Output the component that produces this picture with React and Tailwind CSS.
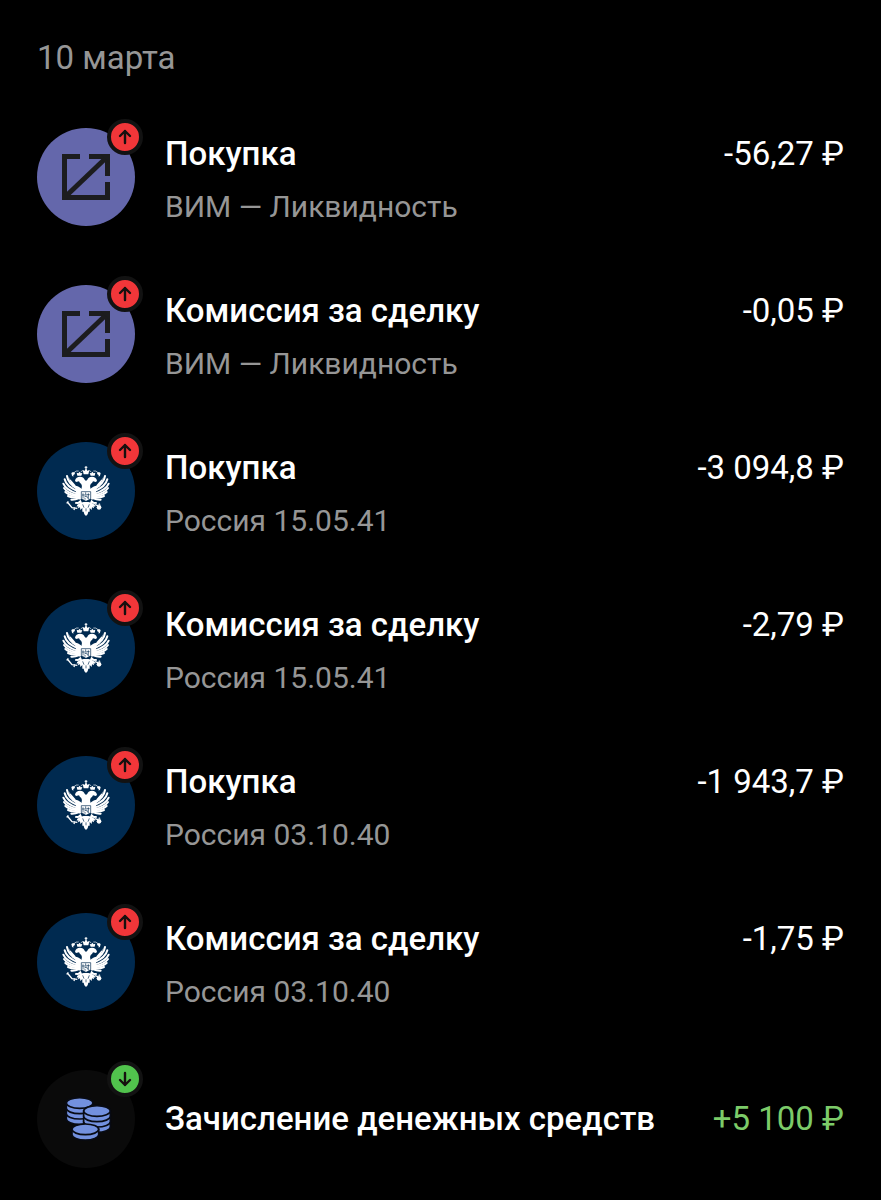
import React from "react";

const operations = [
  { icon: "fund", title: "Покупка", subtitle: "ВИМ — Ликвидность", amount: "-56,27 ₽" },
  { icon: "fund", title: "Комиссия за сделку", subtitle: "ВИМ — Ликвидность", amount: "-0,05 ₽" },
  { icon: "eagle", title: "Покупка", subtitle: "Россия 15.05.41", amount: "-3 094,8 ₽" },
  { icon: "eagle", title: "Комиссия за сделку", subtitle: "Россия 15.05.41", amount: "-2,79 ₽" },
  { icon: "eagle", title: "Покупка", subtitle: "Россия 03.10.40", amount: "-1 943,7 ₽" },
  { icon: "eagle", title: "Комиссия за сделку", subtitle: "Россия 03.10.40", amount: "-1,75 ₽" },
  { icon: "coins", title: "Зачисление денежных средств", amount: "+5 100 ₽", incoming: true },
];

const circleColors = {
  fund: "bg-[#6467ab]",
  eagle: "bg-[#002a50]",
  coins: "bg-[#0a0a0a]",
};

function FundIcon() {
  return (
    <svg viewBox="0 0 98 98" className="size-full" fill="none" stroke="#1c1c1e" strokeWidth="5" aria-hidden="true">
      <path d="M43 28.5H27.5V69.5H70.5V54" />
      <path d="M52 28.5H70.5V48" />
      <path d="M28 69 70 29" />
      <path d="M64 26H73V36Z" fill="#1c1c1e" stroke="none" />
    </svg>
  );
}

// Left half of the eagle, mirrored for the right one
function EagleHalf() {
  return (
    <>
      {/* wing */}
      <path d="M76 92C82 92 90 97 97 103V130L90 134L80 128Z" />
      <g fill="none" stroke="white" strokeWidth="6" strokeLinecap="round">
        <path d="M51 63Q54 86 84 101" />
        <path d="M44 73Q49 95 82 108" />
        <path d="M40 86Q48 105 80 115" />
        <path d="M42 99Q52 114 80 120" />
        <path d="M46 111Q58 122 82 124" />
        <path d="M54 123Q66 129 84 127" />
        <path d="M64 134Q74 135 88 129" />
      </g>
      <path d="M56 66C61 76 68 79 76 90L80 104L66 94Z" />
      {/* head and neck */}
      <path d="M75 77C76 69 83 65 90 65C97 65 102 68 104 74L109 79V112H93L95 98C97 92 95 87 90 84L87 79L78 81Z" />
      {/* crown and ribbon */}
      <path d="M82 62 80 53 85 55 89 50 92 55 97 54 94 62Z" />
      <path d="M66 62 64 54 69 51 75 53 74 58 70 60 70 65Z" />
      <path d="M72 53Q78 46 86 48M92 51Q96 46 102 47" fill="none" stroke="white" strokeWidth="2" />
      {/* leg and tail */}
      <path d="M101 141 92 143 82 149 80 155 85 154 84 160 90 157 91 165 97 159 97 170 101 170 103 178 108 183V141Z" />
      <path d="M92 134 84 141 76 141 75 146 84 147 96 143Z" />
    </>
  );
}

function EagleIcon() {
  return (
    <svg viewBox="0 0 216 216" className="size-[72px]" fill="white" aria-hidden="true">
      <EagleHalf />
      <g transform="translate(216 0) scale(-1 1)">
        <EagleHalf />
      </g>
      <path d="M108 33V42M104 37H112" stroke="white" strokeWidth="3" />
      <path d="M98 46 103 48 108 40 113 48 118 46 115 58H101Z" />
      <path d="M94 110H122V131L108 139L94 131Z" stroke="#002a50" strokeWidth="2" />
      <path
        d="M99 115V130M107 112V122M115 115V132M96 120H105M109 119H119M103 126 110 123 113 130M105 129V134"
        fill="none"
        stroke="#002a50"
        strokeWidth="2"
      />
      <path d="M98 148 102 158M118 148 114 158M108 160V169" stroke="#002a50" strokeWidth="2" />
      <path d="M52 141 66 158 82 160M50 145 55 139M74 157 72 165" fill="none" stroke="white" strokeWidth="4" />
      <path d="M134 149 144 152" stroke="white" strokeWidth="4" />
      <circle cx="147" cy="157" r="7" />
      <path d="M148 145V151M145 148H151" stroke="white" strokeWidth="2" />
    </svg>
  );
}

function CoinStack({ cx, cy, layers }) {
  return (
    <g>
      {layers.map((layer) => (
        <path key={layer} d={`M${cx - 40} ${cy + layer * 16}v16a40 16 0 0 0 80 0v-16z`} />
      ))}
      <ellipse cx={cx} cy={cy} rx="40" ry="16" />
    </g>
  );
}

function CoinsIcon() {
  return (
    <svg viewBox="0 0 294 294" className="size-full" fill="#7391df" stroke="#080b14" strokeWidth="5" aria-hidden="true">
      <CoinStack cx={128} cy={99} layers={[2, 1, 0]} />
      <CoinStack cx={180} cy={123} layers={[2, 1, 0]} />
      <CoinStack cx={145} cy={178} layers={[0]} />
    </svg>
  );
}

function Badge({ incoming }) {
  return (
    <span
      className={`absolute -top-[9px] -right-2 grid size-9 place-items-center rounded-full border-4 border-[#121212] ${
        incoming ? "bg-[#51c34d]" : "bg-[#f13639]"
      }`}
    >
      <svg
        viewBox="0 0 28 28"
        className={`size-7 ${incoming ? "rotate-180" : ""}`}
        fill="none"
        stroke="#16100f"
        strokeWidth="2.4"
        strokeLinecap="round"
        strokeLinejoin="round"
        aria-hidden="true"
      >
        <path d="M14 20V8M9 13 14 8 19 13" />
      </svg>
    </span>
  );
}

function Avatar({ icon, incoming }) {
  return (
    <div className={`relative grid size-[98px] shrink-0 place-items-center rounded-full ${circleColors[icon]}`}>
      {icon === "fund" && <FundIcon />}
      {icon === "eagle" && <EagleIcon />}
      {icon === "coins" && <CoinsIcon />}
      <Badge incoming={incoming} />
    </div>
  );
}

function Operation({ icon, title, subtitle, amount, incoming }) {
  return (
    <li className="flex items-center gap-[30px]">
      <Avatar icon={icon} incoming={incoming} />
      <div className="min-w-0 flex-1">
        <div className="flex items-baseline justify-between gap-4 text-[33px] leading-[52px]">
          <h3 className="font-medium">{title}</h3>
          <span className={`whitespace-nowrap ${incoming ? "text-[#7ccb69]" : ""}`}>{amount}</span>
        </div>
        {subtitle && <p className="mt-2 text-[30px] leading-[38px] text-[#969696]">{subtitle}</p>}
      </div>
    </li>
  );
}

export default function App() {
  return (
    <main className="min-h-screen bg-black px-[37px] pt-8 pb-8 font-['Roboto',sans-serif] text-white">
      <h2 className="text-[33px] leading-[52px] text-[#969696]">10 марта</h2>
      <ul className="mt-11 flex flex-col gap-[59px]">
        {operations.map((operation, index) => (
          <Operation key={index} {...operation} />
        ))}
      </ul>
    </main>
  );
}
